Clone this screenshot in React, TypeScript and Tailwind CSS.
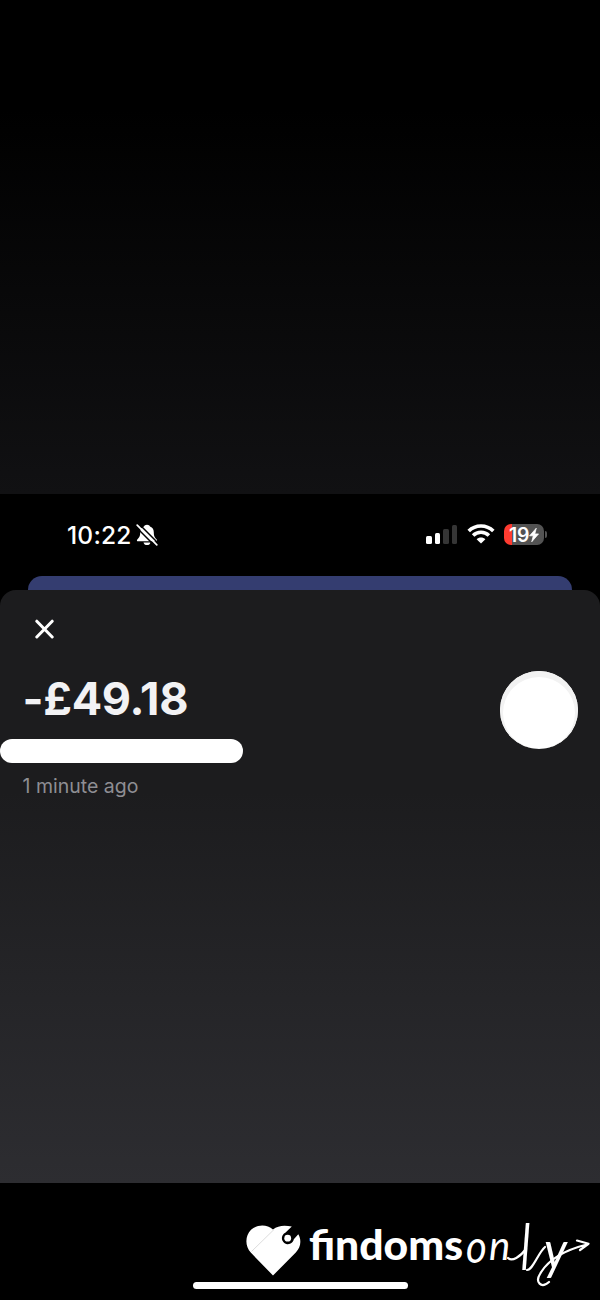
import React from 'react';

const signalBars = [
  { height: 'h-[8px]', color: 'bg-white' },
  { height: 'h-[11px]', color: 'bg-white' },
  { height: 'h-[15px]', color: 'bg-[#353535]' },
  { height: 'h-[19px]', color: 'bg-[#353535]' },
];

const BellOff = () => (
  <svg width="22" height="22" viewBox="0 0 22 22" fill="none">
    <path
      d="M11 .8c-1.600 0-2.600.7-3 1.700C5.200 3.600 4.200 5.600 4.200 8.500c0 4-1.200 5.300-2.700 6.700-1 1-.7 2.100.5 2.100h18c1.200 0 1.500-1.100.5-2.100-1.500-1.400-2.700-2.700-2.700-6.700 0-2.900-1-4.900-3.800-6C13.600 1.500 12.600.8 11 .8Z"
      fill="#fff"
    />
    <path d="M7.500 18.400h7c-.3 1.600-1.700 2.700-3.500 2.700s-3.200-1.100-3.500-2.700Z" fill="#fff" />
    <path d="M0 3 19 22M3 0l19 19" stroke="#000" strokeWidth="1.500" />
    <path d="M1.200 1.200 20.800 20.800" stroke="#fff" strokeWidth="1.700" strokeLinecap="round" />
  </svg>
);

const Wifi = () => (
  <svg width="28" height="20" viewBox="0 0 28 20" fill="none" stroke="#fff" strokeWidth="3.600">
    <path d="M1.700 7C8.500.3 19.500.3 26.300 7" />
    <path d="M6.100 11.500c4.400-4.300 11.400-4.300 15.800 0" />
    <path d="M14 19.600 9.600 15.300c2.400-2.300 6.400-2.300 8.800 0Z" fill="#fff" stroke="none" />
  </svg>
);

const StatusBar = () => (
  <div className="flex h-[82px] items-start justify-between bg-black pl-[67px] pr-[53px] pt-[29px]">
    <div className="flex h-6 items-center">
      <span className="text-[24.5px] font-medium leading-6 tracking-[0.2px]">10:22</span>
      <span className="ml-[4px]">
        <BellOff />
      </span>
    </div>
    <div className="flex h-[23px] items-center">
      <div className="flex h-[19px] items-end gap-[3.3px]">
        {signalBars.map((bar) => (
          <div key={bar.height} className={`w-[5.2px] rounded-[1.5px] ${bar.height} ${bar.color}`}></div>
        ))}
      </div>
      <span className="-mt-[2px] ml-[10px]">
        <Wifi />
      </span>
      <div className="ml-[9px] flex h-[21px] w-[40px] items-center justify-center rounded-[7px] bg-[linear-gradient(90deg,#ff3b30_8px,#535353_8px)]">
        <span className="text-[19.5px] font-semibold leading-5 tracking-[-0.3px]">19</span>
        <svg width="10" height="16" viewBox="0 0 11 16" fill="#fff" stroke="#fff" strokeWidth=".8">
          <path d="M8 .5.6 8.900h4.100L3 15.500l7.500-8.700H6.400L8 .5Z" />
        </svg>
      </div>
      <div className="ml-px h-[7px] w-[2px] rounded-r-full bg-[#535353]"></div>
    </div>
  </div>
);

const TransactionSheet = () => (
  <div className="bg-black">
    <div className="mx-[28px] h-[14px] rounded-t-[14px] bg-[#343d70]"></div>
    <div className="h-[593px] rounded-t-[16px] bg-[linear-gradient(180deg,#1c1c1e_0%,#1c1c1e_34%,#2d2d31_100%)] pt-[29px]">
      <svg className="ml-[35px]" width="20" height="20" viewBox="0 0 20 20" stroke="#fff" strokeWidth="3" strokeLinecap="round">
        <path d="m1.800 2.200 15.400 15.800M17.200 2.200 1.800 18" />
      </svg>

      <div className="flex justify-between pr-[22px] pt-[32px]">
        <div>
          <div className="pl-[22.5px] pt-[4px] text-[45px] font-bold leading-[48px] tracking-[-0.3px] text-[#f2f2f4]">-£49.18</div>
          <div className="mt-[16px] h-[24px] w-[242.5px] rounded-full bg-white"></div>
          <div className="pl-[22.5px] pt-[11px] text-[19.5px] leading-6 text-[#8e8e93]">1 minute ago</div>
        </div>
        <div className="h-[78px] w-[78px] rounded-full bg-white shadow-[inset_0_3px_0_3px_#f2f2f2]"></div>
      </div>
    </div>
  </div>
);

const Brand = () => (
  <svg className="ml-[246px] shrink-0" width="354" height="96" viewBox="0 -20 354 96" fill="none">
    <path
      d="M27 55.500 5 32.800C-1.500 26-.8 15.500 5 9.800 11.500 4 21 4 27 9.600 32 5.200 39 5.100 45.800 6.600l-6.500 6.200a6 6 0 1 0 8.500 6.500l4.500-5c3.600 6.200 2.300 13-2.500 18.200L27 55.500Z"
      fill="#fff"
    />
    <circle cx="41.700" cy="18.200" r="3.400" fill="#fff" />
    <path d="M5.500 31.500 28 9.500" stroke="#ddd" strokeWidth="1" />

    <text x="63" y="40" textLength="154" lengthAdjust="spacingAndGlyphs" className="fill-white font-['Lato'] text-[42px] font-black">
      findoms
    </text>

    <g className="fill-white font-['Lato'] text-[40px] italic">
      <text transform="translate(220 43) scale(1 1.15)">o</text>
      <text transform="translate(243 39.5)">n</text>
      <text transform="translate(275 50) scale(1 1.6)">l</text>
      <text transform="translate(298 49) scale(1.2 1.3)">y</text>
    </g>

    {/* joining strokes and the arrow tail */}
    <g stroke="#fff" strokeWidth="2.200" strokeLinecap="round" strokeLinejoin="round">
      <path d="M262 38c4 4 12-1 18-9" />
      <path d="M281 50c6 0 11-17 18-23" />
      <path d="M303 62c-8 7-14 0-9-8 5-9 17-22 47-29.500M331 20.500l11.500 3.300L334 30" />
    </g>
  </svg>
);

const App = () => {
  return (
    <div className="flex h-[1300px] w-[600px] flex-col overflow-hidden bg-black font-['Inter',sans-serif] text-white">
      <div className="h-[494px] bg-[linear-gradient(180deg,#000_0%,#000_22%,#111113_100%)]"></div>
      <StatusBar />
      <TransactionSheet />
      <div className="flex h-[117px] flex-col bg-black pt-[17px]">
        <Brand />
        <div className="mx-auto -mt-[14px] h-[7px] w-[215px] shrink-0 rounded-full bg-white"></div>
      </div>
    </div>
  );
};

export default App;
